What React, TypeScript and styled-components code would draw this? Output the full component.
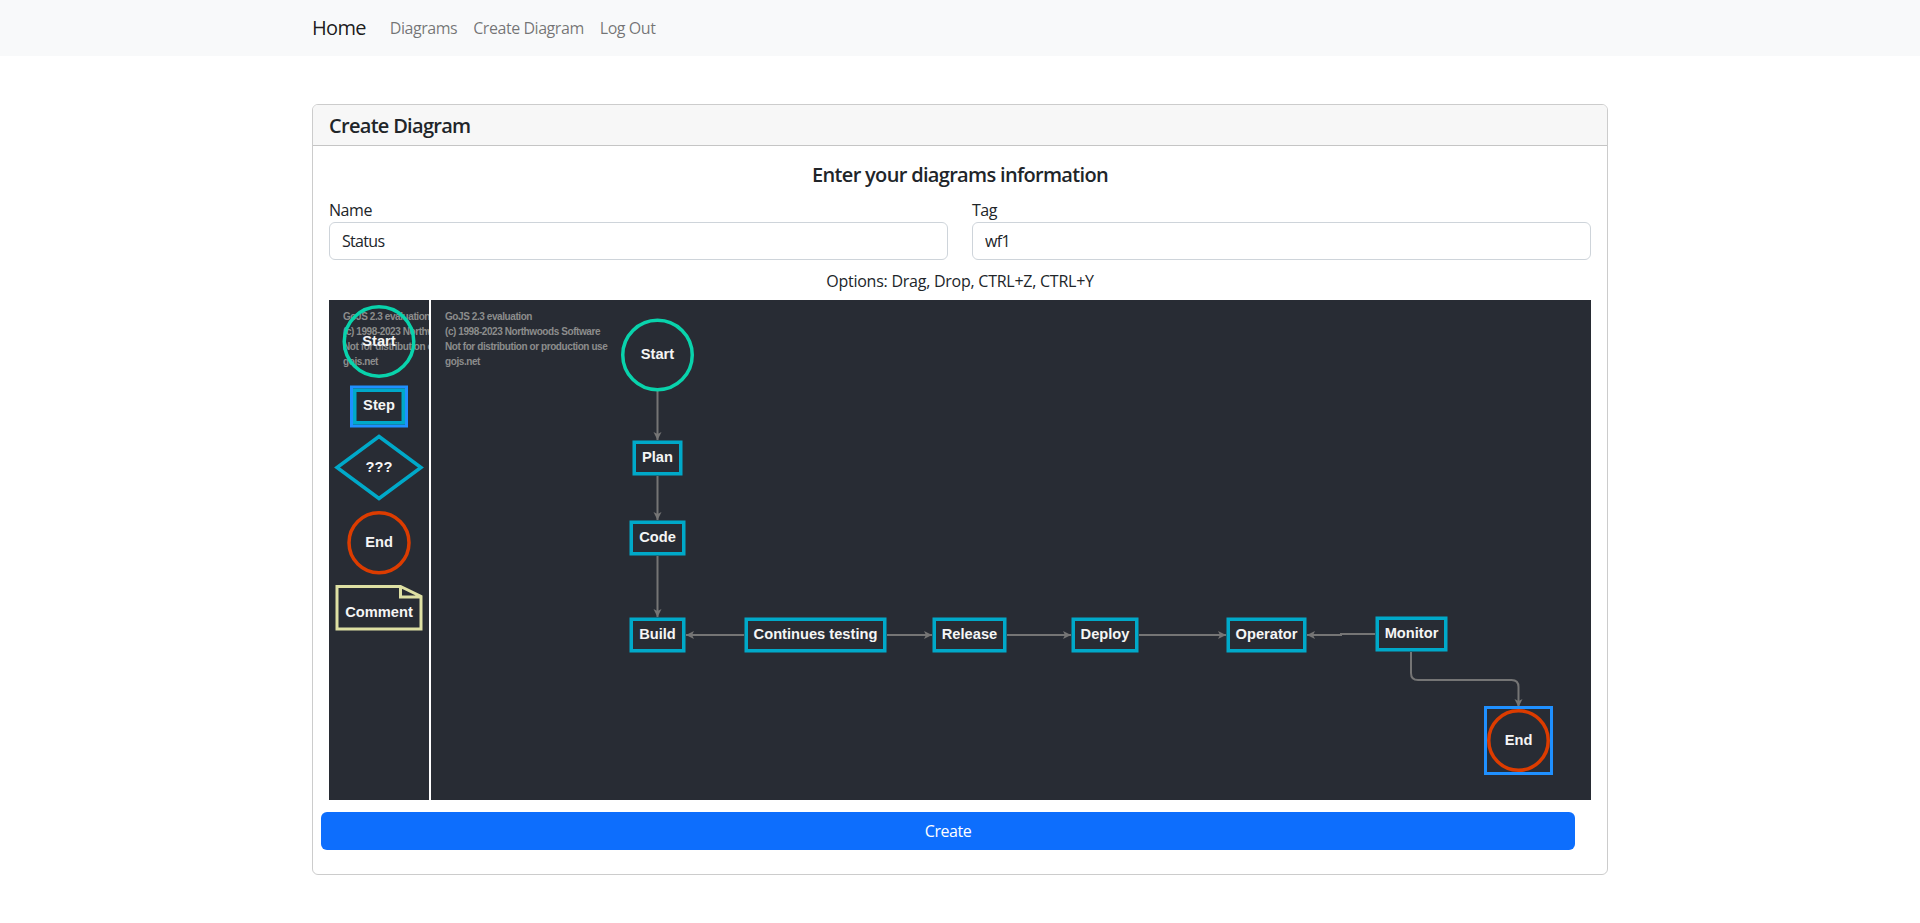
import React, { FC } from 'react';
import styled, { createGlobalStyle } from 'styled-components';

const GlobalStyle = createGlobalStyle`
    * {
        box-sizing: border-box;
    }

    body {
        margin: 0;
        background: #fff;
        color: #212529;
        font-family: 'Open Sans', 'Noto Sans', sans-serif;
        font-size: 16px;
        line-height: 1.5;
        letter-spacing: -0.45px;
    }
`;

const Navbar = styled.nav`
    height: 56px;
    background: #f8f9fa;
`;

const NavInner = styled.div`
    width: 1320px;
    height: 100%;
    margin: 0 auto;
    padding: 0 12px;
    display: flex;
    align-items: center;
`;

const Brand = styled.a`
    font-size: 20px;
    letter-spacing: -0.7px;
    color: rgba(0, 0, 0, 0.9);
    margin-right: 16px;
`;

const NavLink = styled.a`
    padding: 8px;
    color: rgba(0, 0, 0, 0.55);
`;

const Page = styled.main`
    width: 1320px;
    margin: 48px auto 0;
    padding: 0 12px;
`;

const Card = styled.section`
    border: 1px solid rgba(0, 0, 0, 0.2);
    border-radius: 6px;
    overflow: hidden;
`;

const CardHeader = styled.header`
    height: 41px;
    padding: 2px 16px 0;
    display: flex;
    align-items: center;
    background: #f7f7f7;
    border-bottom: 1px solid rgba(0, 0, 0, 0.2);
    font-size: 20px;
    font-weight: 600;
    letter-spacing: -0.7px;
`;

const CardBody = styled.div`
    padding: 16px 16px 24px;
`;

const Title = styled.h5`
    margin: 0 0 7px;
    padding-top: 1px;
    font-size: 20px;
    font-weight: 600;
    line-height: 24px;
    letter-spacing: -0.68px;
    text-align: center;
`;

const FieldRow = styled.div`
    display: grid;
    grid-template-columns: 1fr 1fr;
    column-gap: 24px;
`;

const Label = styled.label`
    display: block;
    height: 28px;
    padding-top: 4px;
`;

const Input = styled.input`
    display: block;
    width: 100%;
    height: 38px;
    padding: 6px 12px;
    border: 1px solid #ced4da;
    border-radius: 6px;
    background: #fff;
    color: #212529;
    font: inherit;
    letter-spacing: -0.7px;
`;

const Hint = styled.p`
    margin: 9px 0 7px;
    letter-spacing: -0.25px;
    text-align: center;
`;

const Canvas = styled.div`
    display: flex;
    height: 500px;
`;

const Palette = styled.svg`
    flex: 0 0 100px;
    height: 500px;
    margin-right: 2px;
    background: #282c34;
`;

const Surface = styled.svg`
    flex: 1;
    height: 500px;
    background: #282c34;
`;

const NodeLabel = styled.text`
    fill: #f5f5f5;
    font-family: 'Liberation Sans', Arial, sans-serif;
    font-size: 14.67px;
    font-weight: 700;
    letter-spacing: 0;
    text-anchor: middle;
    dominant-baseline: central;
`;

const Watermark = styled.text`
    fill: #8c8c8c;
    font-family: 'Liberation Sans', Arial, sans-serif;
    font-size: 10px;
    font-weight: 700;
    letter-spacing: -0.42px;
`;

const SubmitButton = styled.button`
    display: block;
    width: 1254px;
    height: 38px;
    margin: 12px 0 0 -8px;
    border: 0;
    border-radius: 6px;
    background: #0d6efd;
    color: #fff;
    font: inherit;
    letter-spacing: inherit;
    text-align: center;
`;

const TEAL = '#00a9c9';
const GREEN = '#09d3ac';
const RED = '#dc3c00';
const CREAM = '#dee0a3';
const SELECT = '#1f90ff';
const LINK = '#757575';

const WATERMARK = [
    'GoJS 2.3 evaluation',
    '(c) 1998-2023 Northwoods Software',
    'Not for distribution or production use',
    'gojs.net',
];

const WatermarkLines: FC<{ x: number }> = ({ x }) => (
    <>
        {WATERMARK.map((line, i) => (
            <Watermark key={line} x={x} y={19.5 + i * 15}>
                {line}
            </Watermark>
        ))}
    </>
);

interface Box {
    label: string;
    x: number;
    y: number;
    w: number;
    h: number;
}

// measured in surface coordinates (outer edges of each node)
const BOXES: Box[] = [
    { label: 'Plan', x: 201.5, y: 140.5, w: 50, h: 35 },
    { label: 'Code', x: 198.5, y: 220.5, w: 56, h: 35 },
    { label: 'Build', x: 198.5, y: 317.5, w: 56, h: 35 },
    { label: 'Continues testing', x: 313.5, y: 317.5, w: 142, h: 35 },
    { label: 'Release', x: 501.5, y: 317.5, w: 74, h: 35 },
    { label: 'Deploy', x: 640.5, y: 317.5, w: 67, h: 35 },
    { label: 'Operator', x: 795.5, y: 317.5, w: 80, h: 35 },
    { label: 'Monitor', x: 944.5, y: 316.5, w: 72, h: 35 },
];

const LINKS: string[] = [
    'M226.5 91 V140',
    'M226.5 176 V220',
    'M226.5 256 V317',
    'M313 335 H255',
    'M456 335 H501',
    'M576 335 H640',
    'M708 335 H795',
    'M944 334 H910 V335 H876',
    'M980 352 V373 Q980 380 987 380 H1080.5 Q1087.5 380 1087.5 387 V406',
];

// tip x, tip y, direction the arrow points at
const ARROWS: [number, number, 'down' | 'left' | 'right'][] = [
    [226.5, 140, 'down'],
    [226.5, 220, 'down'],
    [226.5, 317, 'down'],
    [255, 335, 'left'],
    [501, 335, 'right'],
    [640, 335, 'right'],
    [795, 335, 'right'],
    [876, 335, 'left'],
    [1087.5, 407, 'down'],
];

const arrowPoints = (x: number, y: number, dir: 'down' | 'left' | 'right') => {
    if (dir === 'down') return `${x},${y} ${x - 4},${y - 8} ${x},${y - 6} ${x + 4},${y - 8}`;
    if (dir === 'left') return `${x},${y} ${x + 8},${y - 4} ${x + 6},${y} ${x + 8},${y + 4}`;
    return `${x},${y} ${x - 8},${y - 4} ${x - 6},${y} ${x - 8},${y + 4}`;
};

const PaletteDrawing: FC = () => (
    <Palette viewBox="0 0 100 500">
        <WatermarkLines x={14} />
        <circle cx={50} cy={41.5} r={34.75} fill="none" stroke={GREEN} strokeWidth={3.5} />
        <NodeLabel x={50} y={41}>
            Start
        </NodeLabel>
        <rect x={22.5} y={87} width={55} height={39} fill="none" stroke={SELECT} strokeWidth={3} />
        <rect x={25.75} y={90.25} width={48.5} height={32.5} fill="none" stroke={TEAL} strokeWidth={3.5} />
        <NodeLabel x={50} y={105}>
            Step
        </NodeLabel>
        <polygon points="50,136.5 92,167.5 50,198.5 8,167.5" fill="none" stroke={TEAL} strokeWidth={3.5} />
        <NodeLabel x={50} y={167}>
            ???
        </NodeLabel>
        <circle cx={50} cy={242.7} r={30} fill="none" stroke={RED} strokeWidth={3.5} />
        <NodeLabel x={50} y={242}>
            End
        </NodeLabel>
        <path
            d="M8 286.5 H71.5 L92 296.5 V329 H8 Z M71.5 286.5 V297 H92"
            fill="none"
            stroke={CREAM}
            strokeWidth={3}
        />
        <NodeLabel x={50} y={312}>
            Comment
        </NodeLabel>
    </Palette>
);

const SurfaceDrawing: FC = () => (
    <Surface viewBox="0 0 1160 500">
        <WatermarkLines x={14} />
        {LINKS.map((d) => (
            <path key={d} d={d} fill="none" stroke={LINK} strokeWidth={2} />
        ))}
        {ARROWS.map(([x, y, dir]) => (
            <polygon key={`${x}-${y}`} points={arrowPoints(x, y, dir)} fill={LINK} />
        ))}
        <circle cx={226.5} cy={55} r={34.75} fill="none" stroke={GREEN} strokeWidth={3.5} />
        <NodeLabel x={226.5} y={54}>
            Start
        </NodeLabel>
        {BOXES.map((box) => (
            <React.Fragment key={box.label}>
                <rect
                    x={box.x + 1.75}
                    y={box.y + 1.75}
                    width={box.w - 3.5}
                    height={box.h - 3.5}
                    fill="none"
                    stroke={TEAL}
                    strokeWidth={3.5}
                />
                <NodeLabel x={box.x + box.w / 2} y={box.y + 16.5}>
                    {box.label}
                </NodeLabel>
            </React.Fragment>
        ))}
        <rect x={1054.5} y={407.5} width={66} height={66} fill="none" stroke={SELECT} strokeWidth={3} />
        <circle cx={1087.5} cy={440.5} r={29.75} fill="none" stroke={RED} strokeWidth={3.5} />
        <NodeLabel x={1087.5} y={439.5}>
            End
        </NodeLabel>
    </Surface>
);

const App: FC = () => (
    <>
        <GlobalStyle />
        <Navbar>
            <NavInner>
                <Brand>Home</Brand>
                <NavLink>Diagrams</NavLink>
                <NavLink>Create Diagram</NavLink>
                <NavLink>Log Out</NavLink>
            </NavInner>
        </Navbar>
        <Page>
            <Card>
                <CardHeader>Create Diagram</CardHeader>
                <CardBody>
                    <Title>Enter your diagrams information</Title>
                    <FieldRow>
                        <div>
                            <Label>Name</Label>
                            <Input defaultValue="Status" />
                        </div>
                        <div>
                            <Label>Tag</Label>
                            <Input defaultValue="wf1" />
                        </div>
                    </FieldRow>
                    <Hint>Options: Drag, Drop, CTRL+Z, CTRL+Y</Hint>
                    <Canvas>
                        <PaletteDrawing />
                        <SurfaceDrawing />
                    </Canvas>
                    <SubmitButton>Create</SubmitButton>
                </CardBody>
            </Card>
        </Page>
    </>
);

export default App;
